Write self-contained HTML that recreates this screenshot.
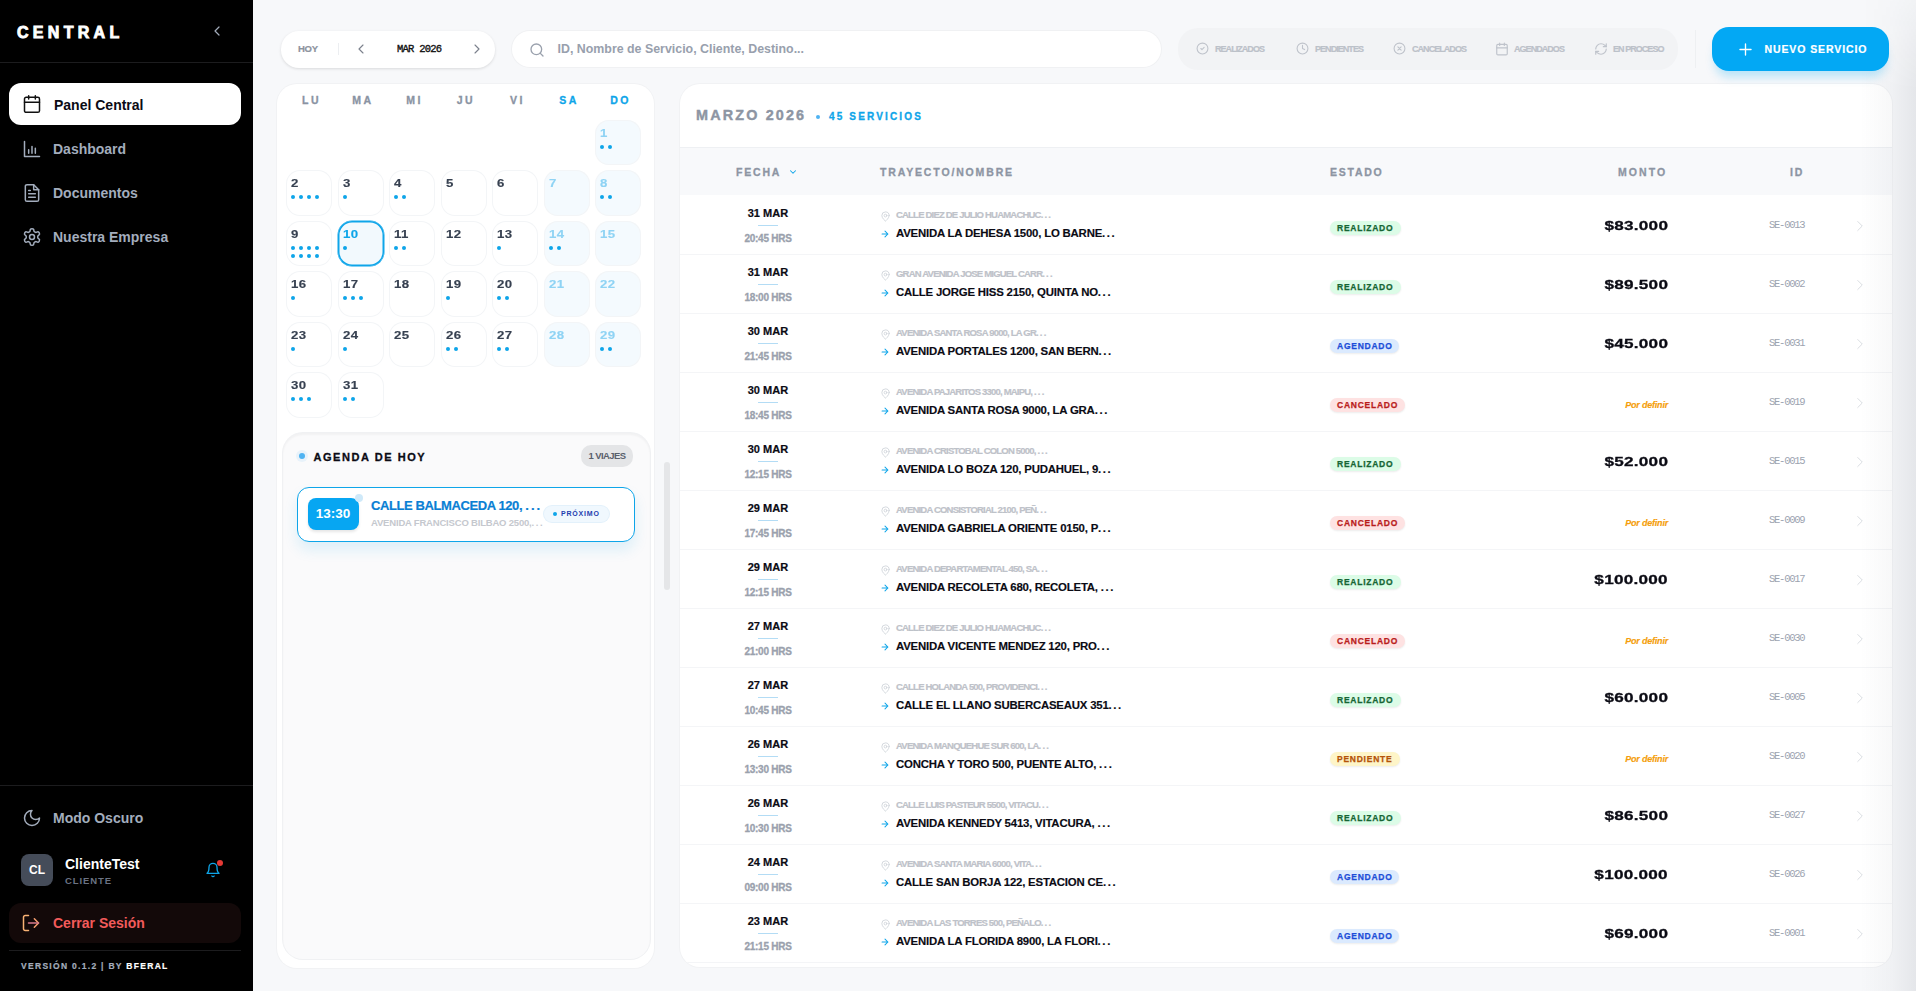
<!DOCTYPE html><html><head><meta charset="utf-8"><style>*{margin:0;padding:0;box-sizing:border-box}
html,body{width:1916px;height:991px;overflow:hidden;background:#f7f8fa;font-family:"Liberation Sans",sans-serif;position:relative}
svg{display:block}
.sb{position:absolute;left:0;top:0;width:253px;height:991px;background:#000}
.logo{position:absolute;left:17px;top:23.5px;color:#fff;font-weight:bold;font-size:16px;letter-spacing:4.3px;line-height:18px;-webkit-text-stroke:.9px #fff}
.collapse{position:absolute;left:209px;top:23px;color:#a3acbb}
.sb-div{position:absolute;left:0;width:253px;height:1px;background:#1c1c1e}
.nav{position:absolute;left:9px;width:232px;height:42px;border-radius:12px;color:#a3adbd}
.nav .nic{position:absolute;left:12.5px;top:11.5px}
.nav .ntx{position:absolute;left:44px;top:14px;font-size:14px;font-weight:bold;line-height:16px}
.nav.act{background:#fff;color:#111}
.nav.act .nic{top:10.5px;left:13px}
.nav.act .ntx{color:#0b0b14;top:14px;left:45px}
.avatar{position:absolute;left:21px;top:854px;width:32px;height:32px;border-radius:8px;background:#454c59;color:#fff;font-weight:bold;font-size:12px;display:flex;align-items:center;justify-content:center}
.uname{position:absolute;left:65px;top:856px;color:#fff;font-weight:bold;font-size:14px;line-height:16px}
.urole{position:absolute;left:65px;top:875px;color:#6b7384;font-weight:bold;font-size:9.5px;letter-spacing:.9px;line-height:11px}
.bell{position:absolute;left:205px;top:862px;color:#0ea5e9}
.bdot{position:absolute;left:12px;top:-2px;width:6px;height:6px;border-radius:50%;background:#e53935}
.logout{position:absolute;left:9px;top:903px;width:232px;height:40px;border-radius:12px;background:#130909;color:#f87171}
.logout .nic{position:absolute;left:11.5px;top:10px;color:#f4a96a}
.logout .ntx{position:absolute;left:44px;top:12px;font-size:14px;font-weight:bold;line-height:16px;color:#f25b5b}
.ver{position:absolute;left:21px;top:961px;color:#a3acbb;font-weight:bold;font-size:8.5px;letter-spacing:1.3px;line-height:10px;-webkit-text-stroke:.2px #a3acbb}
.ver b{color:#fff;-webkit-text-stroke:.2px #fff}

.datenav{position:absolute;left:281px;top:31px;width:214px;height:37px;background:#fff;border-radius:18px;box-shadow:0 1px 3px rgba(0,0,0,.12)}
.hoy{position:absolute;left:17px;top:12px;font-size:9.5px;font-weight:bold;color:#8d939e;line-height:11px;letter-spacing:-.3px;-webkit-text-stroke:.2px #8d939e}
.dsep{position:absolute;left:57px;top:12px;width:1px;height:12px;background:#eceef1}
.dprev{position:absolute;left:72px;top:10px;color:#7b818c}
.dnext{position:absolute;left:188px;top:10px;color:#7b818c}
.dmon{position:absolute;left:116px;top:13px;font-family:"Liberation Mono",monospace;font-size:10.5px;color:#111;line-height:11px;letter-spacing:-.75px;-webkit-text-stroke:.35px #111}
.search{position:absolute;left:512px;top:30.5px;width:649px;height:36.5px;background:#fff;border-radius:18px;box-shadow:0 0 0 1px #f0f1f3}
.sic{position:absolute;left:16.5px;top:11.5px;color:#9aa1ad}
.sph{position:absolute;left:45.5px;top:11px;font-size:12.4px;color:#98a0ad;line-height:14px;font-weight:bold}
.filters{position:absolute;left:1178px;top:28px;width:500px;height:41.5px;background:#f2f3f5;border-radius:20px}
.flt{position:absolute;top:14px;display:flex;align-items:center;color:#bfc3cb}
.flt span{margin-left:6px;font-size:9px;font-weight:bold;color:#bcc1c9;-webkit-text-stroke:.2px #bcc1c9;letter-spacing:-.95px;line-height:10px}
.vsep{position:absolute;left:1695px;top:30px;width:1px;height:38px;background:#eef0f2}
.newbtn{z-index:5;position:absolute;left:1712px;top:27px;width:177px;height:44px;border-radius:17px;background:#03a8f4;box-shadow:0 9px 10px -3px rgba(3,168,244,.25);color:#fff}
.newbtn svg{position:absolute;left:24px;top:12.5px}
.newbtn span{position:absolute;left:52.5px;top:17px;font-size:10.5px;font-weight:bold;letter-spacing:.9px;line-height:11px;-webkit-text-stroke:.2px #fff}

.calcard{position:absolute;left:277px;top:84px;width:377px;height:884px;background:#fff;border-radius:20px;box-shadow:0 0 0 1px #f1f2f4}
.wd{position:absolute;top:9.5px;width:46px;text-align:center;font-size:10.5px;font-weight:bold;color:#8a93a3;letter-spacing:2.5px;line-height:12px;text-indent:5px;-webkit-text-stroke:.3px currentColor}
.wd.we{color:#0ea5e9}
.day{position:absolute;width:46px;height:45.5px;border-radius:14px;box-shadow:inset 0 0 0 1px #f3f5f7}
.day.wkend{background:#f4fafe}
.day.today{box-shadow:inset 0 0 0 1.5px #0ea5e9,0 0 0 .5px #0ea5e9;background:#f2f9fd}
.dn{position:absolute;left:5px;top:7px;font-size:11.3px;font-weight:bold;color:#374151;line-height:13px;letter-spacing:.35px;-webkit-text-stroke:.15px currentColor;transform:scaleX(1.17);transform-origin:0 0}
.wkend .dn{color:#8fd3f4}
.today .dn{color:#0ea5e9}
.dots{position:absolute;left:5px;top:25px;width:36px;display:flex;flex-wrap:wrap}
.dots i{display:block;width:4px;height:4px;border-radius:50%;background:#0ea5e9;margin-right:4px;margin-bottom:3.9px}

.agenda{position:absolute;left:5.5px;top:349px;width:367.5px;height:526px;background:#fafafb;border-radius:20px;box-shadow:inset 0 2px 2px rgba(0,0,0,.035), 0 0 0 1px #f0f1f3}
.agdot{position:absolute;left:16.5px;top:20px;width:6px;height:6px;border-radius:50%;background:#4fb3f2;box-shadow:0 0 0 3px rgba(79,179,242,.1)}
.agt{position:absolute;left:31px;top:17.5px;font-size:11px;font-weight:bold;letter-spacing:1.55px;color:#0b0b14;line-height:13px;-webkit-text-stroke:.3px #0b0b14}
.agb{position:absolute;left:298.5px;top:12px;width:52px;height:22px;border-radius:10px;background:#e4e5e7;font-size:9.5px;font-weight:bold;color:#59606c;text-align:center;line-height:22px;letter-spacing:-.6px}
.agitem{position:absolute;left:14.5px;top:54px;width:338px;height:55px;background:#fff;border:1.5px solid #0ea5e9;border-radius:12px;box-shadow:0 8px 14px rgba(14,165,233,.12)}
.agtime{position:absolute;left:9.5px;top:9.5px;width:51px;height:32px;border-radius:8px;background:#07a6f2;color:#fff;font-size:13.5px;font-weight:bold;text-align:center;line-height:32px;box-shadow:0 2px 3px rgba(0,0,0,.1)}
.agping{position:absolute;left:57px;top:6px;width:8px;height:8px;border-radius:50%;background:#cfe9f9}
.agtitle{position:absolute;left:73px;top:10.5px;font-size:13px;font-weight:bold;color:#0a7fd4;line-height:14px;letter-spacing:-.4px;-webkit-text-stroke:.2px #0a7fd4}
.agsub{position:absolute;left:73px;top:30px;font-size:9.5px;font-weight:bold;color:#c5c8ce;line-height:10px;letter-spacing:-.19px}
.agnext{position:absolute;left:246px;top:17.5px;width:65px;height:16px;border-radius:8px;background:#f0f8fe;box-shadow:0 0 0 1px #e3f1fb;font-size:7px;font-weight:bold;color:#1e40af;line-height:16px;letter-spacing:.8px;padding-left:17px}
.agnext i{position:absolute;left:9px;top:6px;width:4px;height:4px;border-radius:50%;background:#0ea5e9}
.lscroll{position:absolute;left:664px;top:462px;width:6px;height:128px;border-radius:3px;background:#e5e6e8}

.tcard{position:absolute;left:680px;top:84px;width:1212px;height:883px;background:#fff;border-radius:20px;overflow:hidden;box-shadow:0 0 0 1px #f1f2f4}
.thead-title{position:absolute;left:0;top:0;width:100%;height:63px}
.mt{position:absolute;left:16px;top:22.5px;font-size:14.4px;font-weight:bold;color:#8d95a3;letter-spacing:2.15px;line-height:17px;-webkit-text-stroke:.4px #8d95a3}
.mdot{position:absolute;left:136px;top:31px;width:4px;height:4px;border-radius:50%;background:#4fb3f2}
.ms{position:absolute;left:149px;top:26.5px;font-size:10px;font-weight:bold;color:#0ea5e9;letter-spacing:2.15px;line-height:12px;-webkit-text-stroke:.3px #0ea5e9}
.thead{position:absolute;left:0;top:63px;width:100%;height:48px;background:#f8f9fb;border-top:1px solid #eef0f3}
.th{position:absolute;top:18px;font-size:10.5px;font-weight:bold;color:#8d95a3;letter-spacing:1.85px;line-height:12px;-webkit-text-stroke:.3px #8d95a3}
.th-f{left:56px;letter-spacing:1.8px}
.th-fi{position:absolute;left:108px;top:19px;color:#0ea5e9}
.th-t{left:200px}
.th-e{left:650px;letter-spacing:1.75px}
.th-m{left:938px;letter-spacing:2.05px}
.th-i{left:1110px}
.row{position:absolute;left:0;width:100%;height:59px;border-bottom:1px solid #f4f5f7}
.rd{position:absolute;left:48px;top:11px;width:80px;text-align:center;font-size:11px;font-weight:bold;color:#0b0b14;line-height:13px;letter-spacing:.05px;-webkit-text-stroke:.2px #0b0b14}
.rl{position:absolute;left:78px;top:29px;width:20px;height:1px;background:#b3dcf5}
.rt{position:absolute;left:48px;top:37px;width:80px;text-align:center;font-size:10px;font-weight:bold;color:#9aa1ad;-webkit-text-stroke:.3px #9aa1ad;line-height:11px;letter-spacing:-.25px}
.rpin{position:absolute;left:199.5px;top:14.5px;color:#d1d5db}
.ro{position:absolute;left:216px;top:14px;font-size:9.5px;font-weight:bold;color:#bec2c9;line-height:10px;letter-spacing:-.8px;-webkit-text-stroke:.2px #bec2c9}
.rarr{position:absolute;left:200px;top:32.5px;color:#0ea5e9}
.rdst{position:absolute;left:216px;top:31px;font-size:11.4px;font-weight:bold;color:#0b0b14;line-height:13px;letter-spacing:-.2px;-webkit-text-stroke:.15px #0b0b14}
.st{position:absolute;left:650px;top:24.5px;height:14px;border-radius:8px;font-size:8.5px;font-weight:bold;letter-spacing:.75px;-webkit-text-stroke:.25px currentColor;line-height:14px;padding:0 7px;box-shadow:0 1px 2px rgba(0,0,0,.08)}
.st-r{background:#dcfce7;color:#166534;width:71px}
.st-a{background:#dbeafe;color:#1d4ed8;width:69px}
.st-c{background:#fee2e2;color:#b91c1c;width:75px}
.st-p{background:#fef5c8;color:#b45309;width:70px}
.mon{position:absolute;right:224px;top:22px;font-size:13.5px;font-weight:bold;color:#0b0b14;line-height:15px;letter-spacing:.2px;-webkit-text-stroke:.3px #0b0b14;transform:scaleX(1.27);transform-origin:100% 0}
.mon.pd{top:26.5px;font-size:9px;font-style:italic;color:#f59e0b;line-height:10px;letter-spacing:-.2px;-webkit-text-stroke:.15px #f59e0b;transform:none}
.rid{position:absolute;left:1089px;top:23.5px;font-family:"Liberation Mono",monospace;font-size:10.5px;color:#9ca3af;line-height:11px;letter-spacing:-1.25px}
.rchev{position:absolute;left:1171px;top:20.5px;color:#d9dce1}
.rshade{z-index:3;position:absolute;left:1860px;top:0;width:56px;height:991px;background:linear-gradient(to right,rgba(0,0,0,0),rgba(20,30,50,.03) 57%,rgba(20,30,50,.08));pointer-events:none;-webkit-mask-image:linear-gradient(to bottom,rgba(0,0,0,.3) 0,#000 90px)}

.el{letter-spacing:1.6px}
.ro .el{letter-spacing:1.2px}
.agtitle .el{letter-spacing:2px}
</style></head><body>
<div class="sb">
<div class="logo">CENTRAL</div>
<div class="collapse"><svg width="16" height="16" viewBox="0 0 24 24" fill="none" stroke="currentColor" stroke-width="1.8" stroke-linecap="round" stroke-linejoin="round" ><path d="m15 18-6-6 6-6"/></svg></div>
<div class="sb-div" style="top:62px"></div>
<div class="nav act" style="top:83px"><span class="nic"><svg width="20" height="20" viewBox="0 0 24 24" fill="none" stroke="currentColor" stroke-width="1.8" stroke-linecap="round" stroke-linejoin="round" ><rect x="3" y="4" width="18" height="18" rx="2"/><path d="M16 2v4M8 2v4M3 10h18"/></svg></span><span class="ntx">Panel Central</span></div>
<div class="nav" style="top:127px"><span class="nic"><svg width="20" height="20" viewBox="0 0 24 24" fill="none" stroke="currentColor" stroke-width="1.8" stroke-linecap="round" stroke-linejoin="round" ><path d="M3 3v18h18"/><path d="M8 17v-4M12 17V9M16 17v-6" /></svg></span><span class="ntx">Dashboard</span></div>
<div class="nav" style="top:171px"><span class="nic"><svg width="20" height="20" viewBox="0 0 24 24" fill="none" stroke="currentColor" stroke-width="1.8" stroke-linecap="round" stroke-linejoin="round" ><path d="M14 2H6a2 2 0 0 0-2 2v16a2 2 0 0 0 2 2h12a2 2 0 0 0 2-2V8z"/><path d="M14 2v6h6M16 13H8M16 17H8M10 9H8"/></svg></span><span class="ntx">Documentos</span></div>
<div class="nav" style="top:215px"><span class="nic"><svg width="20" height="20" viewBox="0 0 24 24" fill="none" stroke="currentColor" stroke-width="1.8" stroke-linecap="round" stroke-linejoin="round" ><path d="M12.22 2h-.44a2 2 0 0 0-2 2v.18a2 2 0 0 1-1 1.73l-.43.25a2 2 0 0 1-2 0l-.15-.08a2 2 0 0 0-2.73.73l-.22.38a2 2 0 0 0 .73 2.73l.15.1a2 2 0 0 1 1 1.72v.51a2 2 0 0 1-1 1.74l-.15.09a2 2 0 0 0-.73 2.73l.22.38a2 2 0 0 0 2.73.73l.15-.08a2 2 0 0 1 2 0l.43.25a2 2 0 0 1 1 1.73V20a2 2 0 0 0 2 2h.44a2 2 0 0 0 2-2v-.18a2 2 0 0 1 1-1.73l.43-.25a2 2 0 0 1 2 0l.15.08a2 2 0 0 0 2.73-.73l.22-.39a2 2 0 0 0-.73-2.73l-.15-.08a2 2 0 0 1-1-1.74v-.5a2 2 0 0 1 1-1.74l.15-.09a2 2 0 0 0 .73-2.73l-.22-.38a2 2 0 0 0-2.73-.73l-.15.08a2 2 0 0 1-2 0l-.43-.25a2 2 0 0 1-1-1.73V4a2 2 0 0 0-2-2z"/><circle cx="12" cy="12" r="3"/></svg></span><span class="ntx">Nuestra Empresa</span></div>
<div class="sb-div" style="top:785px"></div>
<div class="nav dark" style="top:796px"><span class="nic"><svg width="20" height="20" viewBox="0 0 24 24" fill="none" stroke="currentColor" stroke-width="1.8" stroke-linecap="round" stroke-linejoin="round" ><path d="M12 3a6 6 0 0 0 9 9 9 9 0 1 1-9-9Z"/></svg></span><span class="ntx">Modo Oscuro</span></div>
<div class="avatar">CL</div><div class="uname">ClienteTest</div><div class="urole">CLIENTE</div>
<div class="bell"><svg width="16" height="16" viewBox="0 0 24 24" fill="none" stroke="currentColor" stroke-width="2" stroke-linecap="round" stroke-linejoin="round" ><path d="M6 8a6 6 0 0 1 12 0c0 7 3 9 3 9H3s3-2 3-9"/><path d="M10.3 21a1.94 1.94 0 0 0 3.4 0"/></svg><span class="bdot"></span></div>
<div class="logout"><span class="nic"><svg width="20" height="20" viewBox="0 0 24 24" fill="none" stroke="currentColor" stroke-width="1.8" stroke-linecap="round" stroke-linejoin="round" ><path d="M9 21H5a2 2 0 0 1-2-2V5a2 2 0 0 1 2-2h4" stroke="#f8b274"/><path d="m16 17 5-5-5-5" stroke="#f7a070"/><path d="M21 12H9" stroke="#d67a8c"/></svg></span><span class="ntx">Cerrar Sesión</span></div>
<div class="sb-div" style="top:950px;left:9px;width:232px"></div>
<div class="ver">VERSIÓN 0.1.2 | BY <b>BFERAL</b></div>
</div>
<div class="datenav"><span class="hoy">HOY</span><span class="dsep"></span><span class="dprev"><svg width="16" height="16" viewBox="0 0 24 24" fill="none" stroke="currentColor" stroke-width="1.7" stroke-linecap="round" stroke-linejoin="round" ><path d="m15 18-6-6 6-6"/></svg></span><span class="dmon">MAR 2026</span><span class="dnext"><svg width="16" height="16" viewBox="0 0 24 24" fill="none" stroke="currentColor" stroke-width="1.7" stroke-linecap="round" stroke-linejoin="round" ><path d="m9 18 6-6-6-6"/></svg></span></div>
<div class="search"><span class="sic"><svg width="16" height="16" viewBox="0 0 24 24" fill="none" stroke="currentColor" stroke-width="2" stroke-linecap="round" stroke-linejoin="round" ><circle cx="11" cy="11" r="8"/><path d="m21 21-4.3-4.3"/></svg></span><span class="sph">ID, Nombre de Servicio, Cliente, Destino...</span></div>
<div class="filters">
<span class="flt" style="left:18px;top:14.0px"><svg width="13" height="13" viewBox="0 0 24 24" fill="none" stroke="currentColor" stroke-width="2" stroke-linecap="round" stroke-linejoin="round" ><circle cx="12" cy="12" r="10"/><path d="m9 12 2 2 4-4"/></svg><span style="margin-left:6px">REALIZADOS</span></span>
<span class="flt" style="left:118px;top:14.0px"><svg width="13" height="13" viewBox="0 0 24 24" fill="none" stroke="currentColor" stroke-width="2" stroke-linecap="round" stroke-linejoin="round" ><circle cx="12" cy="12" r="10"/><path d="M12 6v6l4 2"/></svg><span style="margin-left:6px">PENDIENTES</span></span>
<span class="flt" style="left:215px;top:14.0px"><svg width="13" height="13" viewBox="0 0 24 24" fill="none" stroke="currentColor" stroke-width="2" stroke-linecap="round" stroke-linejoin="round" ><circle cx="12" cy="12" r="10"/><path d="m15 9-6 6M9 9l6 6"/></svg><span style="margin-left:6px">CANCELADOS</span></span>
<span class="flt" style="left:317px;top:13.5px"><svg width="14" height="14" viewBox="0 0 24 24" fill="none" stroke="currentColor" stroke-width="2" stroke-linecap="round" stroke-linejoin="round" ><rect x="3" y="4" width="18" height="18" rx="2"/><path d="M16 2v4M8 2v4M3 10h18"/></svg><span style="margin-left:5px">AGENDADOS</span></span>
<span class="flt" style="left:416px;top:13.5px"><svg width="14" height="14" viewBox="0 0 24 24" fill="none" stroke="currentColor" stroke-width="2" stroke-linecap="round" stroke-linejoin="round" ><path d="M3 12a9 9 0 0 1 9-9 9.75 9.75 0 0 1 6.74 2.74L21 8"/><path d="M21 3v5h-5"/><path d="M21 12a9 9 0 0 1-9 9 9.75 9.75 0 0 1-6.74-2.74L3 16"/><path d="M8 16H3v5"/></svg><span style="margin-left:5px">EN PROCESO</span></span>
</div><div class="vsep"></div>
<div class="newbtn"><svg width="19" height="19" viewBox="0 0 24 24" fill="none" stroke="currentColor" stroke-width="1.7" stroke-linecap="round" stroke-linejoin="round" ><path d="M12 5v14M5 12h14"/></svg><span>NUEVO SERVICIO</span></div>
<div class="calcard">
<div class="wd" style="left:9.0px">LU</div>
<div class="wd" style="left:60.5px">MA</div>
<div class="wd" style="left:112.0px">MI</div>
<div class="wd" style="left:163.5px">JU</div>
<div class="wd" style="left:215.0px">VI</div>
<div class="wd we" style="left:266.5px">SA</div>
<div class="wd we" style="left:318.0px">DO</div>
<div class="day wkend" style="left:318.0px;top:35.9px"><span class="dn">1</span><span class="dots"><i></i><i></i></span></div>
<div class="day" style="left:9.0px;top:86.4px"><span class="dn">2</span><span class="dots"><i></i><i></i><i></i><i></i></span></div>
<div class="day" style="left:60.5px;top:86.4px"><span class="dn">3</span><span class="dots"><i></i></span></div>
<div class="day" style="left:112.0px;top:86.4px"><span class="dn">4</span><span class="dots"><i></i><i></i></span></div>
<div class="day" style="left:163.5px;top:86.4px"><span class="dn">5</span><span class="dots"></span></div>
<div class="day" style="left:215.0px;top:86.4px"><span class="dn">6</span><span class="dots"></span></div>
<div class="day wkend" style="left:266.5px;top:86.4px"><span class="dn">7</span><span class="dots"></span></div>
<div class="day wkend" style="left:318.0px;top:86.4px"><span class="dn">8</span><span class="dots"><i></i><i></i></span></div>
<div class="day" style="left:9.0px;top:136.9px"><span class="dn">9</span><span class="dots"><i></i><i></i><i></i><i></i><i></i><i></i><i></i><i></i></span></div>
<div class="day today" style="left:60.5px;top:136.9px"><span class="dn">10</span><span class="dots"><i></i></span></div>
<div class="day" style="left:112.0px;top:136.9px"><span class="dn">11</span><span class="dots"><i></i><i></i></span></div>
<div class="day" style="left:163.5px;top:136.9px"><span class="dn">12</span><span class="dots"></span></div>
<div class="day" style="left:215.0px;top:136.9px"><span class="dn">13</span><span class="dots"><i></i></span></div>
<div class="day wkend" style="left:266.5px;top:136.9px"><span class="dn">14</span><span class="dots"><i></i><i></i></span></div>
<div class="day wkend" style="left:318.0px;top:136.9px"><span class="dn">15</span><span class="dots"></span></div>
<div class="day" style="left:9.0px;top:187.4px"><span class="dn">16</span><span class="dots"><i></i></span></div>
<div class="day" style="left:60.5px;top:187.4px"><span class="dn">17</span><span class="dots"><i></i><i></i><i></i></span></div>
<div class="day" style="left:112.0px;top:187.4px"><span class="dn">18</span><span class="dots"></span></div>
<div class="day" style="left:163.5px;top:187.4px"><span class="dn">19</span><span class="dots"><i></i></span></div>
<div class="day" style="left:215.0px;top:187.4px"><span class="dn">20</span><span class="dots"><i></i><i></i></span></div>
<div class="day wkend" style="left:266.5px;top:187.4px"><span class="dn">21</span><span class="dots"></span></div>
<div class="day wkend" style="left:318.0px;top:187.4px"><span class="dn">22</span><span class="dots"></span></div>
<div class="day" style="left:9.0px;top:237.9px"><span class="dn">23</span><span class="dots"><i></i></span></div>
<div class="day" style="left:60.5px;top:237.9px"><span class="dn">24</span><span class="dots"><i></i></span></div>
<div class="day" style="left:112.0px;top:237.9px"><span class="dn">25</span><span class="dots"></span></div>
<div class="day" style="left:163.5px;top:237.9px"><span class="dn">26</span><span class="dots"><i></i><i></i></span></div>
<div class="day" style="left:215.0px;top:237.9px"><span class="dn">27</span><span class="dots"><i></i><i></i></span></div>
<div class="day wkend" style="left:266.5px;top:237.9px"><span class="dn">28</span><span class="dots"></span></div>
<div class="day wkend" style="left:318.0px;top:237.9px"><span class="dn">29</span><span class="dots"><i></i><i></i></span></div>
<div class="day" style="left:9.0px;top:288.4px"><span class="dn">30</span><span class="dots"><i></i><i></i><i></i></span></div>
<div class="day" style="left:60.5px;top:288.4px"><span class="dn">31</span><span class="dots"><i></i><i></i></span></div>
<div class="agenda"><span class="agdot"></span><span class="agt">AGENDA DE HOY</span><span class="agb">1 VIAJES</span><div class="agitem"><span class="agtime">13:30</span><span class="agping"></span><span class="agtitle">CALLE BALMACEDA 120, <span class="el">..</span>.</span><span class="agsub">AVENIDA FRANCISCO BILBAO 2500,<span class="el">..</span>.</span><span class="agnext"><i></i>PRÓXIMO</span></div></div>
</div>
<div class="lscroll"></div>
<div class="tcard">
<div class="thead-title"><span class="mt">MARZO 2026</span><span class="mdot"></span><span class="ms">45 SERVICIOS</span></div>
<div class="thead"><span class="th th-f">FECHA</span><span class="th-fi"><svg width="10" height="10" viewBox="0 0 24 24" fill="none" stroke="currentColor" stroke-width="2.5" stroke-linecap="round" stroke-linejoin="round" ><path d="m6 9 6 6 6-6"/></svg></span><span class="th th-t">TRAYECTO/NOMBRE</span><span class="th th-e">ESTADO</span><span class="th th-m">MONTO</span><span class="th th-i">ID</span></div>
<div class="row" style="top:112px"><span class="rd">31 MAR</span><span class="rl"></span><span class="rt">20:45 HRS</span><span class="rpin"><svg width="11" height="11" viewBox="0 0 24 24" fill="none" stroke="currentColor" stroke-width="2" stroke-linecap="round" stroke-linejoin="round" ><path d="M20 10c0 6-8 12-8 12s-8-6-8-12a8 8 0 0 1 16 0Z"/><circle cx="12" cy="10" r="3"/></svg></span><span class="ro">CALLE DIEZ DE JULIO HUAMACHUC<span class="el">..</span>.</span><span class="rarr"><svg width="10" height="10" viewBox="0 0 24 24" fill="none" stroke="currentColor" stroke-width="2.5" stroke-linecap="round" stroke-linejoin="round" ><path d="M5 12h14M12 5l7 7-7 7"/></svg></span><span class="rdst">AVENIDA LA DEHESA 1500, LO BARNE<span class="el">..</span>.</span><span class="st st-r">REALIZADO</span><span class="mon">$83.000</span><span class="rid">SE-0013</span><span class="rchev"><svg width="18" height="18" viewBox="0 0 24 24" fill="none" stroke="currentColor" stroke-width="1.3" stroke-linecap="round" stroke-linejoin="round" ><path d="m9 18 6-6-6-6"/></svg></span></div>
<div class="row" style="top:171px"><span class="rd">31 MAR</span><span class="rl"></span><span class="rt">18:00 HRS</span><span class="rpin"><svg width="11" height="11" viewBox="0 0 24 24" fill="none" stroke="currentColor" stroke-width="2" stroke-linecap="round" stroke-linejoin="round" ><path d="M20 10c0 6-8 12-8 12s-8-6-8-12a8 8 0 0 1 16 0Z"/><circle cx="12" cy="10" r="3"/></svg></span><span class="ro">GRAN AVENIDA JOSE MIGUEL CARR<span class="el">..</span>.</span><span class="rarr"><svg width="10" height="10" viewBox="0 0 24 24" fill="none" stroke="currentColor" stroke-width="2.5" stroke-linecap="round" stroke-linejoin="round" ><path d="M5 12h14M12 5l7 7-7 7"/></svg></span><span class="rdst">CALLE JORGE HISS 2150, QUINTA NO<span class="el">..</span>.</span><span class="st st-r">REALIZADO</span><span class="mon">$89.500</span><span class="rid">SE-0002</span><span class="rchev"><svg width="18" height="18" viewBox="0 0 24 24" fill="none" stroke="currentColor" stroke-width="1.3" stroke-linecap="round" stroke-linejoin="round" ><path d="m9 18 6-6-6-6"/></svg></span></div>
<div class="row" style="top:230px"><span class="rd">30 MAR</span><span class="rl"></span><span class="rt">21:45 HRS</span><span class="rpin"><svg width="11" height="11" viewBox="0 0 24 24" fill="none" stroke="currentColor" stroke-width="2" stroke-linecap="round" stroke-linejoin="round" ><path d="M20 10c0 6-8 12-8 12s-8-6-8-12a8 8 0 0 1 16 0Z"/><circle cx="12" cy="10" r="3"/></svg></span><span class="ro">AVENIDA SANTA ROSA 9000, LA GR<span class="el">..</span>.</span><span class="rarr"><svg width="10" height="10" viewBox="0 0 24 24" fill="none" stroke="currentColor" stroke-width="2.5" stroke-linecap="round" stroke-linejoin="round" ><path d="M5 12h14M12 5l7 7-7 7"/></svg></span><span class="rdst">AVENIDA PORTALES 1200, SAN BERN<span class="el">..</span>.</span><span class="st st-a">AGENDADO</span><span class="mon">$45.000</span><span class="rid">SE-0031</span><span class="rchev"><svg width="18" height="18" viewBox="0 0 24 24" fill="none" stroke="currentColor" stroke-width="1.3" stroke-linecap="round" stroke-linejoin="round" ><path d="m9 18 6-6-6-6"/></svg></span></div>
<div class="row" style="top:289px"><span class="rd">30 MAR</span><span class="rl"></span><span class="rt">18:45 HRS</span><span class="rpin"><svg width="11" height="11" viewBox="0 0 24 24" fill="none" stroke="currentColor" stroke-width="2" stroke-linecap="round" stroke-linejoin="round" ><path d="M20 10c0 6-8 12-8 12s-8-6-8-12a8 8 0 0 1 16 0Z"/><circle cx="12" cy="10" r="3"/></svg></span><span class="ro">AVENIDA PAJARITOS 3300, MAIPU, <span class="el">..</span>.</span><span class="rarr"><svg width="10" height="10" viewBox="0 0 24 24" fill="none" stroke="currentColor" stroke-width="2.5" stroke-linecap="round" stroke-linejoin="round" ><path d="M5 12h14M12 5l7 7-7 7"/></svg></span><span class="rdst">AVENIDA SANTA ROSA 9000, LA GRA<span class="el">..</span>.</span><span class="st st-c">CANCELADO</span><span class="mon pd">Por definir</span><span class="rid">SE-0019</span><span class="rchev"><svg width="18" height="18" viewBox="0 0 24 24" fill="none" stroke="currentColor" stroke-width="1.3" stroke-linecap="round" stroke-linejoin="round" ><path d="m9 18 6-6-6-6"/></svg></span></div>
<div class="row" style="top:348px"><span class="rd">30 MAR</span><span class="rl"></span><span class="rt">12:15 HRS</span><span class="rpin"><svg width="11" height="11" viewBox="0 0 24 24" fill="none" stroke="currentColor" stroke-width="2" stroke-linecap="round" stroke-linejoin="round" ><path d="M20 10c0 6-8 12-8 12s-8-6-8-12a8 8 0 0 1 16 0Z"/><circle cx="12" cy="10" r="3"/></svg></span><span class="ro">AVENIDA CRISTOBAL COLON 5000, <span class="el">..</span>.</span><span class="rarr"><svg width="10" height="10" viewBox="0 0 24 24" fill="none" stroke="currentColor" stroke-width="2.5" stroke-linecap="round" stroke-linejoin="round" ><path d="M5 12h14M12 5l7 7-7 7"/></svg></span><span class="rdst">AVENIDA LO BOZA 120, PUDAHUEL, 9<span class="el">..</span>.</span><span class="st st-r">REALIZADO</span><span class="mon">$52.000</span><span class="rid">SE-0015</span><span class="rchev"><svg width="18" height="18" viewBox="0 0 24 24" fill="none" stroke="currentColor" stroke-width="1.3" stroke-linecap="round" stroke-linejoin="round" ><path d="m9 18 6-6-6-6"/></svg></span></div>
<div class="row" style="top:407px"><span class="rd">29 MAR</span><span class="rl"></span><span class="rt">17:45 HRS</span><span class="rpin"><svg width="11" height="11" viewBox="0 0 24 24" fill="none" stroke="currentColor" stroke-width="2" stroke-linecap="round" stroke-linejoin="round" ><path d="M20 10c0 6-8 12-8 12s-8-6-8-12a8 8 0 0 1 16 0Z"/><circle cx="12" cy="10" r="3"/></svg></span><span class="ro">AVENIDA CONSISTORIAL 2100, PEÑ<span class="el">..</span>.</span><span class="rarr"><svg width="10" height="10" viewBox="0 0 24 24" fill="none" stroke="currentColor" stroke-width="2.5" stroke-linecap="round" stroke-linejoin="round" ><path d="M5 12h14M12 5l7 7-7 7"/></svg></span><span class="rdst">AVENIDA GABRIELA ORIENTE 0150, P<span class="el">..</span>.</span><span class="st st-c">CANCELADO</span><span class="mon pd">Por definir</span><span class="rid">SE-0009</span><span class="rchev"><svg width="18" height="18" viewBox="0 0 24 24" fill="none" stroke="currentColor" stroke-width="1.3" stroke-linecap="round" stroke-linejoin="round" ><path d="m9 18 6-6-6-6"/></svg></span></div>
<div class="row" style="top:466px"><span class="rd">29 MAR</span><span class="rl"></span><span class="rt">12:15 HRS</span><span class="rpin"><svg width="11" height="11" viewBox="0 0 24 24" fill="none" stroke="currentColor" stroke-width="2" stroke-linecap="round" stroke-linejoin="round" ><path d="M20 10c0 6-8 12-8 12s-8-6-8-12a8 8 0 0 1 16 0Z"/><circle cx="12" cy="10" r="3"/></svg></span><span class="ro">AVENIDA DEPARTAMENTAL 450, SA<span class="el">..</span>.</span><span class="rarr"><svg width="10" height="10" viewBox="0 0 24 24" fill="none" stroke="currentColor" stroke-width="2.5" stroke-linecap="round" stroke-linejoin="round" ><path d="M5 12h14M12 5l7 7-7 7"/></svg></span><span class="rdst">AVENIDA RECOLETA 680, RECOLETA, <span class="el">..</span>.</span><span class="st st-r">REALIZADO</span><span class="mon">$100.000</span><span class="rid">SE-0017</span><span class="rchev"><svg width="18" height="18" viewBox="0 0 24 24" fill="none" stroke="currentColor" stroke-width="1.3" stroke-linecap="round" stroke-linejoin="round" ><path d="m9 18 6-6-6-6"/></svg></span></div>
<div class="row" style="top:525px"><span class="rd">27 MAR</span><span class="rl"></span><span class="rt">21:00 HRS</span><span class="rpin"><svg width="11" height="11" viewBox="0 0 24 24" fill="none" stroke="currentColor" stroke-width="2" stroke-linecap="round" stroke-linejoin="round" ><path d="M20 10c0 6-8 12-8 12s-8-6-8-12a8 8 0 0 1 16 0Z"/><circle cx="12" cy="10" r="3"/></svg></span><span class="ro">CALLE DIEZ DE JULIO HUAMACHUC<span class="el">..</span>.</span><span class="rarr"><svg width="10" height="10" viewBox="0 0 24 24" fill="none" stroke="currentColor" stroke-width="2.5" stroke-linecap="round" stroke-linejoin="round" ><path d="M5 12h14M12 5l7 7-7 7"/></svg></span><span class="rdst">AVENIDA VICENTE MENDEZ 120, PRO<span class="el">..</span>.</span><span class="st st-c">CANCELADO</span><span class="mon pd">Por definir</span><span class="rid">SE-0030</span><span class="rchev"><svg width="18" height="18" viewBox="0 0 24 24" fill="none" stroke="currentColor" stroke-width="1.3" stroke-linecap="round" stroke-linejoin="round" ><path d="m9 18 6-6-6-6"/></svg></span></div>
<div class="row" style="top:584px"><span class="rd">27 MAR</span><span class="rl"></span><span class="rt">10:45 HRS</span><span class="rpin"><svg width="11" height="11" viewBox="0 0 24 24" fill="none" stroke="currentColor" stroke-width="2" stroke-linecap="round" stroke-linejoin="round" ><path d="M20 10c0 6-8 12-8 12s-8-6-8-12a8 8 0 0 1 16 0Z"/><circle cx="12" cy="10" r="3"/></svg></span><span class="ro">CALLE HOLANDA 500, PROVIDENCI<span class="el">..</span>.</span><span class="rarr"><svg width="10" height="10" viewBox="0 0 24 24" fill="none" stroke="currentColor" stroke-width="2.5" stroke-linecap="round" stroke-linejoin="round" ><path d="M5 12h14M12 5l7 7-7 7"/></svg></span><span class="rdst">CALLE EL LLANO SUBERCASEAUX 351<span class="el">..</span>.</span><span class="st st-r">REALIZADO</span><span class="mon">$60.000</span><span class="rid">SE-0005</span><span class="rchev"><svg width="18" height="18" viewBox="0 0 24 24" fill="none" stroke="currentColor" stroke-width="1.3" stroke-linecap="round" stroke-linejoin="round" ><path d="m9 18 6-6-6-6"/></svg></span></div>
<div class="row" style="top:643px"><span class="rd">26 MAR</span><span class="rl"></span><span class="rt">13:30 HRS</span><span class="rpin"><svg width="11" height="11" viewBox="0 0 24 24" fill="none" stroke="currentColor" stroke-width="2" stroke-linecap="round" stroke-linejoin="round" ><path d="M20 10c0 6-8 12-8 12s-8-6-8-12a8 8 0 0 1 16 0Z"/><circle cx="12" cy="10" r="3"/></svg></span><span class="ro">AVENIDA MANQUEHUE SUR 600, LA<span class="el">..</span>.</span><span class="rarr"><svg width="10" height="10" viewBox="0 0 24 24" fill="none" stroke="currentColor" stroke-width="2.5" stroke-linecap="round" stroke-linejoin="round" ><path d="M5 12h14M12 5l7 7-7 7"/></svg></span><span class="rdst">CONCHA Y TORO 500, PUENTE ALTO, <span class="el">..</span>.</span><span class="st st-p">PENDIENTE</span><span class="mon pd">Por definir</span><span class="rid">SE-0020</span><span class="rchev"><svg width="18" height="18" viewBox="0 0 24 24" fill="none" stroke="currentColor" stroke-width="1.3" stroke-linecap="round" stroke-linejoin="round" ><path d="m9 18 6-6-6-6"/></svg></span></div>
<div class="row" style="top:702px"><span class="rd">26 MAR</span><span class="rl"></span><span class="rt">10:30 HRS</span><span class="rpin"><svg width="11" height="11" viewBox="0 0 24 24" fill="none" stroke="currentColor" stroke-width="2" stroke-linecap="round" stroke-linejoin="round" ><path d="M20 10c0 6-8 12-8 12s-8-6-8-12a8 8 0 0 1 16 0Z"/><circle cx="12" cy="10" r="3"/></svg></span><span class="ro">CALLE LUIS PASTEUR 5500, VITACU<span class="el">..</span>.</span><span class="rarr"><svg width="10" height="10" viewBox="0 0 24 24" fill="none" stroke="currentColor" stroke-width="2.5" stroke-linecap="round" stroke-linejoin="round" ><path d="M5 12h14M12 5l7 7-7 7"/></svg></span><span class="rdst">AVENIDA KENNEDY 5413, VITACURA, <span class="el">..</span>.</span><span class="st st-r">REALIZADO</span><span class="mon">$86.500</span><span class="rid">SE-0027</span><span class="rchev"><svg width="18" height="18" viewBox="0 0 24 24" fill="none" stroke="currentColor" stroke-width="1.3" stroke-linecap="round" stroke-linejoin="round" ><path d="m9 18 6-6-6-6"/></svg></span></div>
<div class="row" style="top:761px"><span class="rd">24 MAR</span><span class="rl"></span><span class="rt">09:00 HRS</span><span class="rpin"><svg width="11" height="11" viewBox="0 0 24 24" fill="none" stroke="currentColor" stroke-width="2" stroke-linecap="round" stroke-linejoin="round" ><path d="M20 10c0 6-8 12-8 12s-8-6-8-12a8 8 0 0 1 16 0Z"/><circle cx="12" cy="10" r="3"/></svg></span><span class="ro">AVENIDA SANTA MARIA 6000, VITA<span class="el">..</span>.</span><span class="rarr"><svg width="10" height="10" viewBox="0 0 24 24" fill="none" stroke="currentColor" stroke-width="2.5" stroke-linecap="round" stroke-linejoin="round" ><path d="M5 12h14M12 5l7 7-7 7"/></svg></span><span class="rdst">CALLE SAN BORJA 122, ESTACION CE<span class="el">..</span>.</span><span class="st st-a">AGENDADO</span><span class="mon">$100.000</span><span class="rid">SE-0026</span><span class="rchev"><svg width="18" height="18" viewBox="0 0 24 24" fill="none" stroke="currentColor" stroke-width="1.3" stroke-linecap="round" stroke-linejoin="round" ><path d="m9 18 6-6-6-6"/></svg></span></div>
<div class="row" style="top:820px"><span class="rd">23 MAR</span><span class="rl"></span><span class="rt">21:15 HRS</span><span class="rpin"><svg width="11" height="11" viewBox="0 0 24 24" fill="none" stroke="currentColor" stroke-width="2" stroke-linecap="round" stroke-linejoin="round" ><path d="M20 10c0 6-8 12-8 12s-8-6-8-12a8 8 0 0 1 16 0Z"/><circle cx="12" cy="10" r="3"/></svg></span><span class="ro">AVENIDA LAS TORRES 500, PEÑALO<span class="el">..</span>.</span><span class="rarr"><svg width="10" height="10" viewBox="0 0 24 24" fill="none" stroke="currentColor" stroke-width="2.5" stroke-linecap="round" stroke-linejoin="round" ><path d="M5 12h14M12 5l7 7-7 7"/></svg></span><span class="rdst">AVENIDA LA FLORIDA 8900, LA FLORI<span class="el">..</span>.</span><span class="st st-a">AGENDADO</span><span class="mon">$69.000</span><span class="rid">SE-0001</span><span class="rchev"><svg width="18" height="18" viewBox="0 0 24 24" fill="none" stroke="currentColor" stroke-width="1.3" stroke-linecap="round" stroke-linejoin="round" ><path d="m9 18 6-6-6-6"/></svg></span></div>
</div>
<div class="rshade"></div>
</body></html>
